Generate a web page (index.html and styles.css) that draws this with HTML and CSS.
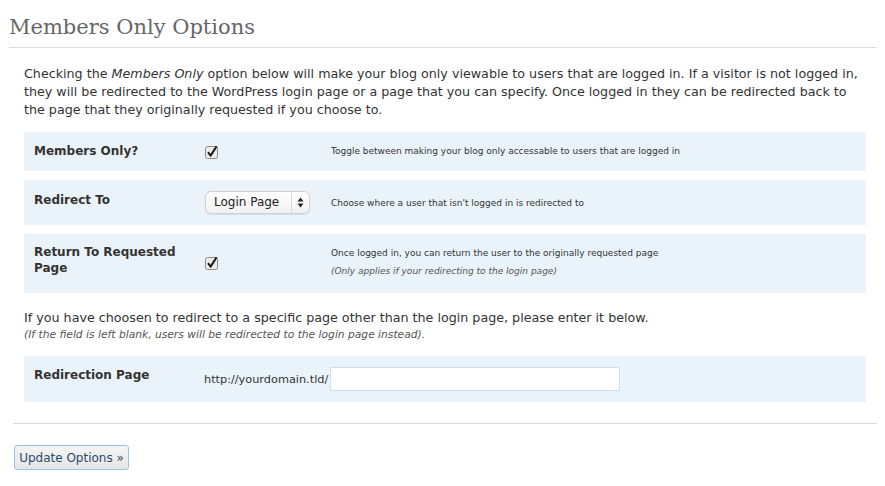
FILE: index.html
```html
<!DOCTYPE html>
<html>
<head>
<meta charset="utf-8">
<link rel="stylesheet" href="styles.css">
</head>
<body>
<div class="wrap">
  <h2 class="title">Members Only Options</h2>
  <div class="content">
    <p class="intro">Checking the <em>Members Only</em> option below will make your blog only viewable to users that are logged in. If a visitor is not logged in, they will be redirected to the WordPress login page or a page that you can specify. Once logged in they can be redirected back to the page that they originally requested if you choose to.</p>
    <div class="table">
      <div class="row row-1">
        <div class="label">Members Only?</div>
        <div class="control"><span class="check"><svg width="14" height="14" viewBox="0 0 14 14"><rect x="0.5" y="1.5" width="12" height="12" rx="2" fill="#ececec" stroke="#8a8a8a"/><path d="M3 7.2 L5.6 10.6 L11.6 1.2" fill="none" stroke="#1a1a1a" stroke-width="2" stroke-linejoin="round"/></svg></span></div>
        <div class="desc">Toggle between making your blog only accessable to users that are logged in</div>
      </div>
      <div class="row row-2">
        <div class="label">Redirect To</div>
        <div class="control"><span class="select"><span class="select-text">Login Page</span><span class="select-arrows"><svg width="7" height="11" viewBox="0 0 7 11"><path d="M3.5 0.5 L6.5 4.5 L0.5 4.5 Z M3.5 10.5 L6.5 6.5 L0.5 6.5 Z" fill="#222"/></svg></span></span></div>
        <div class="desc">Choose where a user that isn't logged in is redirected to</div>
      </div>
      <div class="row row-3">
        <div class="label">Return To Requested Page</div>
        <div class="control"><span class="check"><svg width="14" height="14" viewBox="0 0 14 14"><rect x="0.5" y="1.5" width="12" height="12" rx="2" fill="#ececec" stroke="#8a8a8a"/><path d="M3 7.2 L5.6 10.6 L11.6 1.2" fill="none" stroke="#1a1a1a" stroke-width="2" stroke-linejoin="round"/></svg></span></div>
        <div class="desc">Once logged in, you can return the user to the originally requested page<em class="desc-note">(Only applies if your redirecting to the login page)</em></div>
      </div>
    </div>
    <p class="note">If you have choosen to redirect to a specific page other than the login page, please enter it below.<em class="small">(If the field is left blank, users will be redirected to the login page instead).</em></p>
    <div class="table">
      <div class="row row-4">
        <div class="label">Redirection Page</div>
        <div class="url"><span class="prefix">http://yourdomain.tld/</span><span class="input"></span></div>
      </div>
    </div>
  </div>
  <hr class="rule">
  <div class="submit"><button class="button">Update Options »</button></div>
</div>
</body>
</html>
```
FILE: styles.css
```css
* { box-sizing: border-box; }
html, body { margin: 0; padding: 0; background: #fff; }
body { font-family: "DejaVu Sans", "Lucida Grande", sans-serif; color: #333; font-size: 12px; }
.wrap { padding: 0 8px 0 9px; }
.title {
  margin: 0;
  padding: 14px 0 7px 0;
  font-family: "DejaVu Serif", Georgia, serif;
  font-weight: normal;
  font-size: 21px;
  line-height: 26px;
  color: #666;
  border-bottom: 1px solid #dedede;
}
.content { padding: 0 11px 0 15px; }
.intro { margin: 17px 0 13px 0; line-height: 18px; font-size: 12.7px; }
.table { display: flex; flex-direction: column; gap: 9px; }
.row {
  display: grid;
  grid-template-columns: 171px 126px 1fr;
  background: #eaf3fa;
  padding: 10px 0 11px 10px;
}
.label { font-weight: bold; font-size: 12px; line-height: 18px; color: #333; align-self: start; }
.row-3 .label { line-height: 16px; width: 150px; }
.control { align-self: center; }
.desc { align-self: center; font-size: 9px; line-height: 18px; color: #333; }
.desc-note { display: block; font-size: 9px; color: #555; }
.check { display: block; width: 14px; height: 14px; margin-top: 1px; }
.check svg { display: block; }
.row-2 { padding: 11px 0 11px 10px; }
.row-3 { padding: 10px 0 13px 10px; }
.select {
  display: flex;
  align-items: stretch;
  width: 105px;
  height: 23px;
  border: 1px solid #d0d0d0;
  border-radius: 6px;
  background: linear-gradient(#ffffff, #f1f1f1);
  box-shadow: 0 1px 1px rgba(0,0,0,0.08);
}
.select-text { flex: 1; padding-left: 8px; font-size: 12px; line-height: 21px; color: #222; }
.select-arrows { width: 18px; border-left: 1px solid #d8d8d8; display: flex; align-items: center; justify-content: center; }
.select-arrows svg { display: block; }
.note { margin: 16px 0 13px 0; line-height: 17px; font-size: 12.7px; }
.note .small { display: block; font-size: 10.7px; color: #555; }
.row-4 { grid-template-columns: 170px 1fr; padding: 10px 0 11px 10px; }
.url { display: flex; align-items: center; align-self: center; padding-top: 1px; }
.prefix { font-size: 11.3px; }
.input { display: block; width: 290px; height: 24px; margin-left: 2px; background: #fff; border: 1px solid #cfe0ee; }
.rule { border: 0; border-top: 1px solid #dadada; margin: 21px 0 0 4px; height: 0; }
.submit { padding: 21px 0 0 5px; }
.button {
  font-family: "DejaVu Sans", "Lucida Grande", sans-serif;
  font-size: 12px;
  color: #2b4a6d;
  height: 25px;
  width: 115px;
  padding: 0;
  border: 1px solid #9ec3e0;
  border-radius: 3px;
  background: linear-gradient(#f4f4f4, #e6e6e6);
}
```
